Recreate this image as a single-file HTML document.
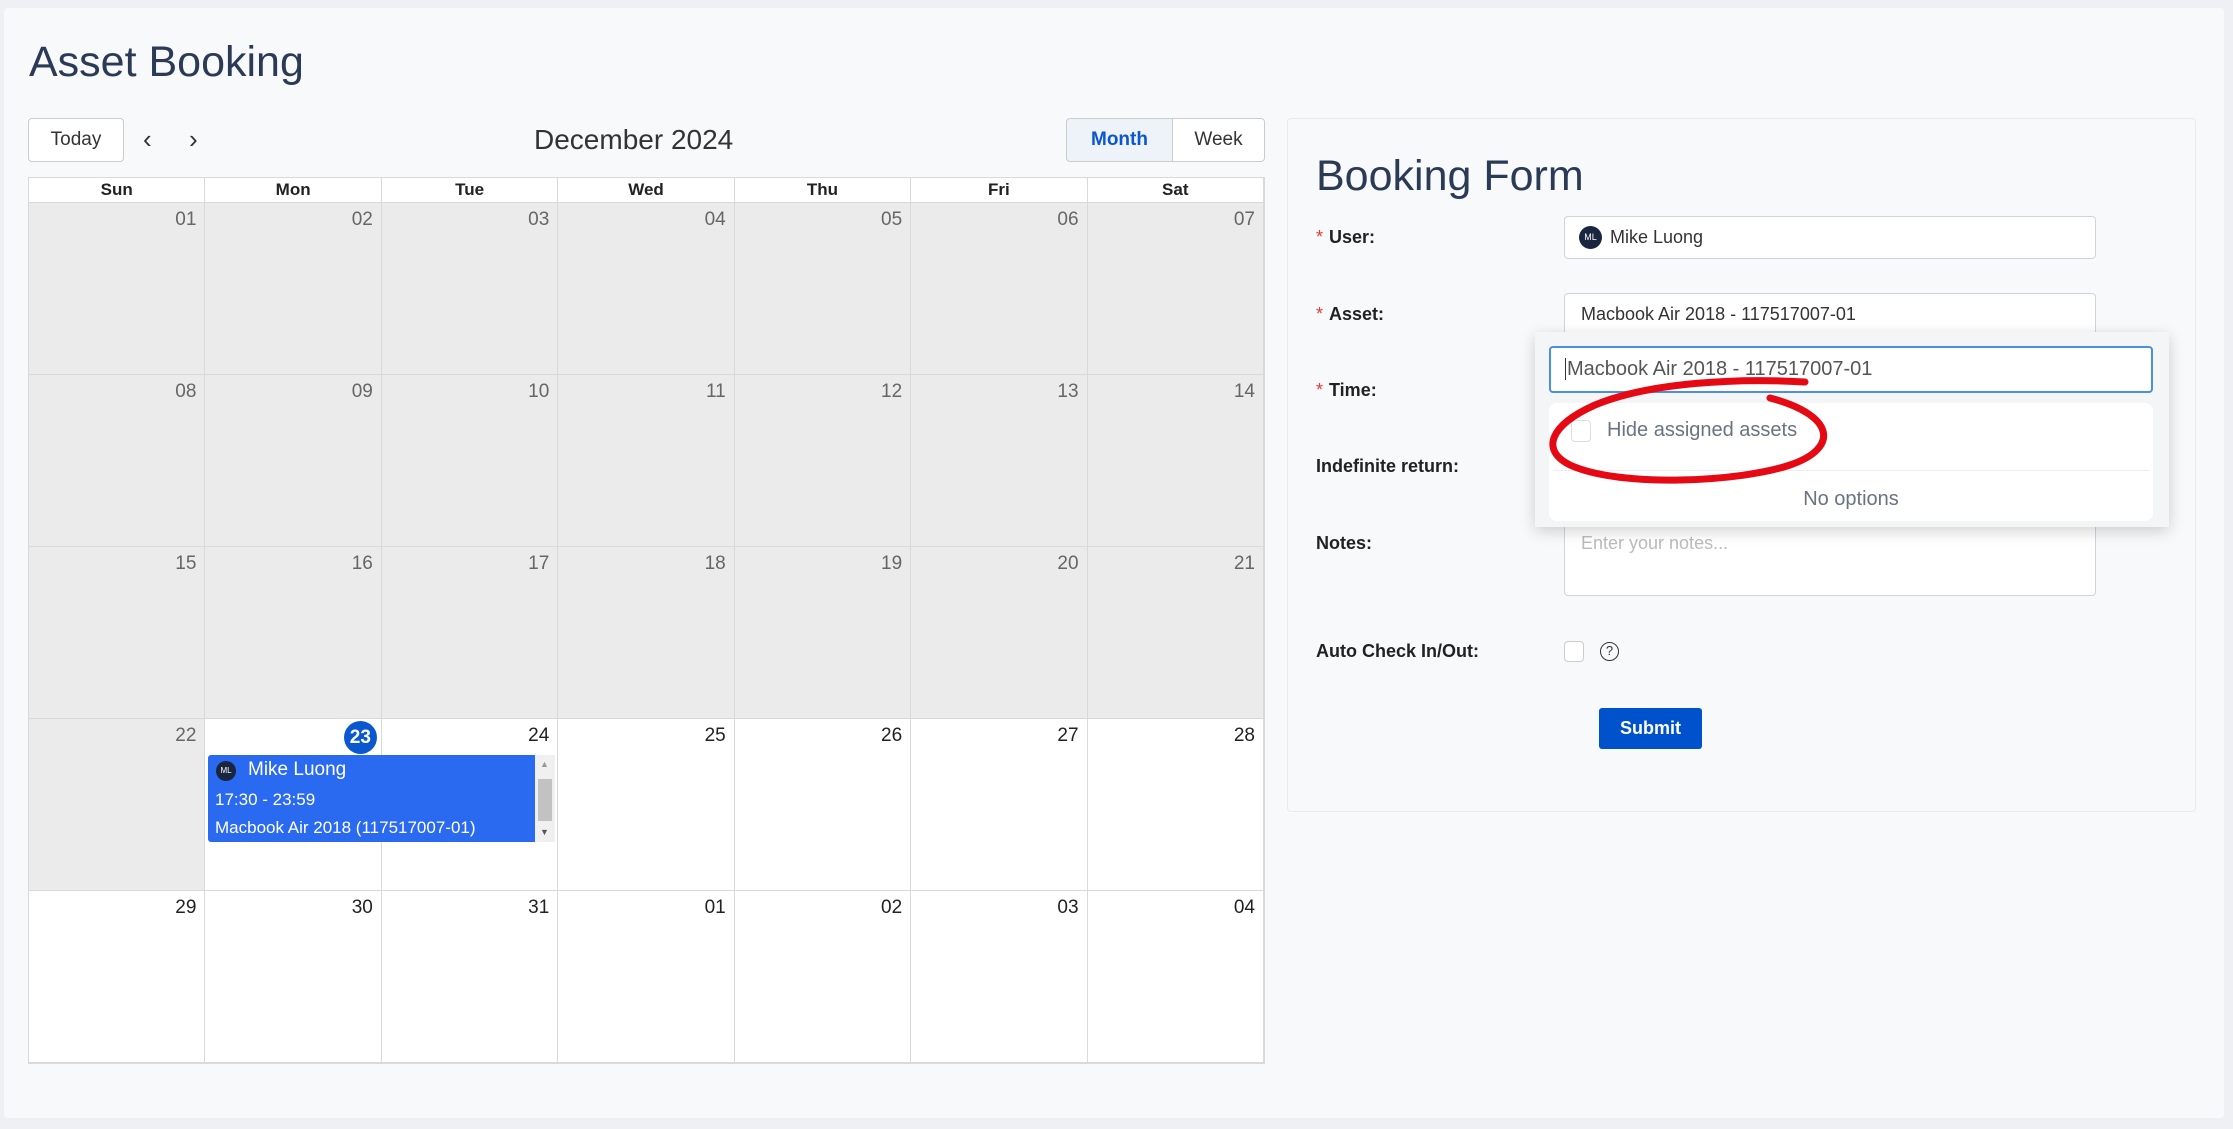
<!DOCTYPE html>
<html><head><style>
*{box-sizing:border-box;margin:0;padding:0}
body{width:2233px;height:1129px;background:#eef0f3;font-family:"Liberation Sans",sans-serif;position:relative;overflow:hidden;color:#1f2937}
.abs{position:absolute}
.card{left:4px;top:8px;width:2220px;height:1110px;background:#f8f9fb;border-radius:4px}
h1{position:absolute;font-weight:400;color:#2b3a55;font-size:43px}
.btn{position:absolute;border:1px solid #ccc;background:#fff;border-radius:4px;font-size:19px;display:flex;align-items:center;justify-content:center;color:#333}
.grid{left:28px;top:177px;width:1237px;height:887px;display:grid;grid-template-columns:repeat(7,1fr);grid-template-rows:25px repeat(5,1fr);border:1px solid #d9d9d9;background:#fff}
.h{border-right:1px solid #d9d9d9;border-bottom:1px solid #d9d9d9;font-weight:bold;font-size:17px;text-align:center;line-height:24px;color:#222}
.c{border-right:1px solid #d9d9d9;border-bottom:1px solid #d9d9d9;text-align:right;padding:6px 8px;font-size:19px;color:#222;position:relative}
.g{background:#ebebeb;color:#666}
.lbl{position:absolute;left:1316px;font-size:18px;font-weight:bold;color:#222}
.lbl i{color:#e53935;font-style:normal;font-weight:normal;margin-right:6px}
.inp{position:absolute;background:#fff;border:1px solid #d0d4da;border-radius:4px;font-size:18px;color:#333;display:flex;align-items:center;padding-left:16px}
</style></head><body>
<div class="abs card"></div>
<h1 style="left:29px;top:38px">Asset Booking</h1>
<div class="btn" style="left:28px;top:118px;width:96px;height:44px">Today</div>
<div class="abs" style="left:143px;top:124px;font-size:26px;color:#333">&#8249;</div>
<div class="abs" style="left:189px;top:124px;font-size:26px;color:#333">&#8250;</div>
<div class="abs" style="left:534px;top:124px;font-size:28px;color:#333">December 2024</div>
<div class="btn" style="left:1066px;top:118px;width:107px;height:44px;background:#eef3f9;color:#0b57d0;font-weight:bold;border-radius:4px 0 0 4px">Month</div>
<div class="btn" style="left:1172px;top:118px;width:93px;height:44px;border-radius:0 4px 4px 0">Week</div>

<div class="abs grid">
<div class="h">Sun</div><div class="h">Mon</div><div class="h">Tue</div><div class="h">Wed</div><div class="h">Thu</div><div class="h">Fri</div><div class="h">Sat</div>
<div class="c g">01</div><div class="c g">02</div><div class="c g">03</div><div class="c g">04</div><div class="c g">05</div><div class="c g">06</div><div class="c g">07</div>
<div class="c g">08</div><div class="c g">09</div><div class="c g">10</div><div class="c g">11</div><div class="c g">12</div><div class="c g">13</div><div class="c g">14</div>
<div class="c g">15</div><div class="c g">16</div><div class="c g">17</div><div class="c g">18</div><div class="c g">19</div><div class="c g">20</div><div class="c g">21</div>
<div class="c g">22</div><div class="c"><span style="display:inline-block;width:33px;height:33px;border-radius:50%;background:#0b57d0;color:#fff;font-weight:bold;text-align:center;line-height:33px;margin-top:-4px;margin-right:-4px">23</span></div><div class="c">24</div><div class="c">25</div><div class="c">26</div><div class="c">27</div><div class="c">28</div>
<div class="c">29</div><div class="c">30</div><div class="c">31</div><div class="c">01</div><div class="c">02</div><div class="c">03</div><div class="c">04</div>
</div>
<div class="abs" style="left:208px;top:755px;width:327px;height:87px;background:#2a6af0;border-radius:3px 0 0 3px;color:#fff;font-size:17px">
 <div style="position:absolute;left:8px;top:6px;width:20px;height:20px;border-radius:50%;background:#1a2540;font-size:8px;text-align:center;line-height:20px">ML</div>
 <div style="position:absolute;left:40px;top:4px;font-size:19px">Mike Luong</div>
 <div style="position:absolute;left:7px;top:35px">17:30 - 23:59</div>
 <div style="position:absolute;left:7px;top:63px">Macbook Air 2018 (117517007-01)</div>
</div>
<div class="abs" style="left:535px;top:755px;width:20px;height:87px;background:#f0f0f0">
 <div style="position:absolute;left:3px;top:24px;width:14px;height:42px;background:#c2c2c2"></div>
 <div style="position:absolute;left:5px;top:4px;font-size:9px;color:#999">&#9650;</div>
 <div style="position:absolute;left:5px;top:72px;font-size:9px;color:#555">&#9660;</div>
</div>

<div class="abs" style="left:1287px;top:118px;width:909px;height:694px;background:#f8f9fb;border:1px solid #e8eaee;border-radius:4px"></div>
<h1 style="left:1316px;top:152px">Booking Form</h1>
<div class="lbl" style="top:227px"><i>*</i>User:</div>
<div class="lbl" style="top:304px"><i>*</i>Asset:</div>
<div class="lbl" style="top:380px"><i>*</i>Time:</div>
<div class="lbl" style="top:456px">Indefinite return:</div>
<div class="lbl" style="top:533px">Notes:</div>
<div class="lbl" style="top:641px">Auto Check In/Out:</div>
<div class="inp" style="left:1564px;top:216px;width:532px;height:43px;padding-left:14px"><span style="width:23px;height:23px;border-radius:50%;background:#1a2540;color:#fff;font-size:9px;text-align:center;line-height:23px;margin-right:8px">ML</span>Mike Luong</div>
<div class="inp" style="left:1564px;top:293px;width:532px;height:43px">Macbook Air 2018 - 117517007-01</div>
<div class="inp" style="left:1564px;top:520px;width:532px;height:76px;align-items:flex-start;padding-top:12px;color:#bbb">Enter your notes...</div>
<div class="abs" style="left:1564px;top:641px;width:20px;height:21px;border:1px solid #ccc;border-radius:4px;background:#fff"></div>
<div class="abs" style="left:1600px;top:642px;width:19px;height:19px;border:1.5px solid #333;border-radius:50%;font-size:13px;text-align:center;line-height:16px;color:#333">?</div>
<div class="abs" style="left:1599px;top:708px;width:103px;height:41px;background:#0052cc;border-radius:3px;color:#fff;font-weight:bold;font-size:18px;text-align:center;line-height:41px">Submit</div>

<div class="abs" style="left:1535px;top:332px;width:634px;height:195px;background:#f4f5f7;box-shadow:0 4px 14px rgba(0,0,0,.18)"></div>
<div class="abs" style="left:1549px;top:346px;width:604px;height:47px;background:#fff;border:2px solid #4a90e2;border-radius:4px;font-size:20px;color:#555;padding-left:14px;line-height:43px"><span style="border-left:1px solid #333;padding-left:1px">Macbook Air 2018 - 117517007-01</span></div>
<div class="abs" style="left:1549px;top:403px;width:604px;height:118px;background:#fff;border-radius:8px">
 <div style="position:absolute;left:22px;top:17px;width:20px;height:22px;border:1px solid #ddd;border-radius:4px"></div>
 <div style="position:absolute;left:58px;top:16px;font-size:20px;color:#6b7280">Hide assigned assets</div>
 <div style="position:absolute;left:4px;right:4px;top:67px;border-top:1px solid #eee"></div>
 <div style="position:absolute;left:0;right:0;top:85px;text-align:center;font-size:20px;color:#6b7280">No options</div>
</div>
<svg class="abs" style="left:1540px;top:370px" width="340" height="120" viewBox="0 0 340 120">
<path d="M265 12 C200 8 110 12 55 35 C10 55 0 80 30 95 C80 118 200 112 250 95 C300 78 295 45 230 28" fill="none" stroke="#e50914" stroke-width="7" stroke-linecap="round"/>
</svg>
</body></html>
